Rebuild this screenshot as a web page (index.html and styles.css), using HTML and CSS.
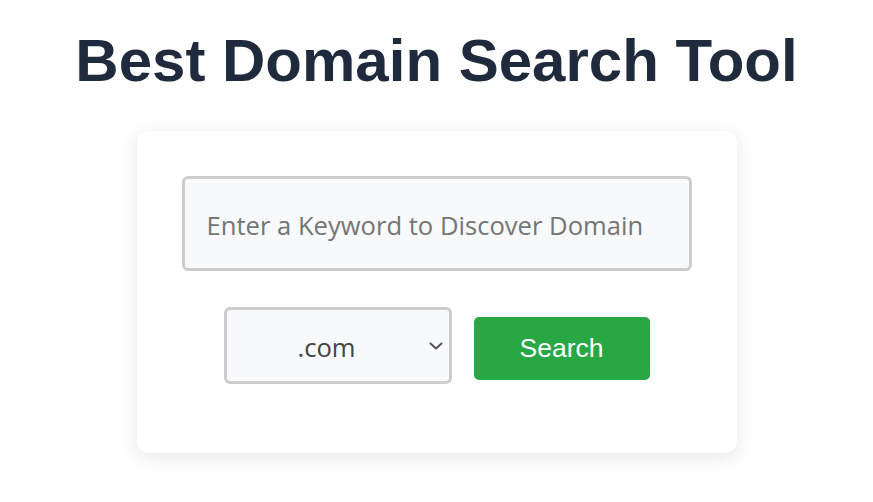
FILE: index.html
```html
<!DOCTYPE html>
<html lang="en">
<head>
  <meta charset="UTF-8">
  <meta name="viewport" content="width=device-width, initial-scale=1.0">
  <title>Best Domain Search Tool</title>
  <link rel="stylesheet" href="styles.css">
</head>
<body>
  <h1 class="title">Best Domain Search Tool</h1>

  <div class="search-box">
    <input type="text" id="keyword" class="keyword-input" placeholder="Enter a Keyword to Discover Domain" />

    <div class="search-row">
      <div class="select-wrap">
        <select id="extension" class="ext-select">
          <option>.com</option>
          <option>.net</option>
          <option>.org</option>
          <option>.io</option>
        </select>
        <svg class="select-arrow" width="14" height="8" viewBox="0 0 14 8">
          <path d="M1.5 1.5 L7 6.5 L12.5 1.5" fill="none" stroke="#555" stroke-width="2" stroke-linecap="round" stroke-linejoin="round"/>
        </svg>
      </div>
      <button class="search-button">Search</button>
    </div>
  </div>
</body>
</html>
```

FILE: styles.css
```css
body {
  background-color: #fff;
  font-family: "Liberation Sans", Arial, sans-serif;
  margin: 0;
  padding-bottom: 60px;
}

.title {
  color: #1f2a3d;
  font-size: 60px;
  font-weight: bold;
  text-align: center;
  margin: 26px 0 36px;
}

.search-box {
  width: 600px;
  box-sizing: border-box;
  margin: 0 auto;
  padding: 45px 45px 69px;
  background-color: #fff;
  border-radius: 12px;
  box-shadow: 0 4px 20px rgba(0, 0, 0, 0.1);
}

.keyword-input {
  display: block;
  width: 100%;
  height: 95px;
  box-sizing: border-box;
  padding: 4px 22px 0;
  border: 3px solid #ccc;
  border-radius: 6px;
  background-color: #f8f9fa;
  font-family: "Open Sans", "Noto Sans", sans-serif;
  font-size: 25.6px;
  color: #333;
  outline: none;
}

.keyword-input::placeholder {
  color: #757575;
}

.search-row {
  display: flex;
  justify-content: center;
  align-items: center;
  gap: 22px;
  margin-top: 36px;
}

.select-wrap {
  position: relative;
  width: 228px;
  height: 77px;
}

.ext-select {
  appearance: none;
  width: 100%;
  height: 100%;
  box-sizing: border-box;
  border: 3px solid #ccc;
  border-radius: 6px;
  background-color: #f8f9fa;
  font-family: "Open Sans", "Noto Sans", sans-serif;
  font-size: 25.6px;
  color: #444;
  text-align: center;
  text-align-last: center;
  padding: 4px 28px 0 6px;
  outline: none;
}

.select-arrow {
  position: absolute;
  right: 9px;
  top: 35px;
  pointer-events: none;
}

.search-button {
  width: 176px;
  height: 63px;
  margin-top: 6px;
  background-color: #28a745;
  color: #fff;
  border: none;
  border-radius: 5px;
  font-family: "Liberation Sans", Arial, sans-serif;
  font-size: 26.5px;
  cursor: pointer;
}

.search-button:hover {
  background-color: #218838;
}
```
